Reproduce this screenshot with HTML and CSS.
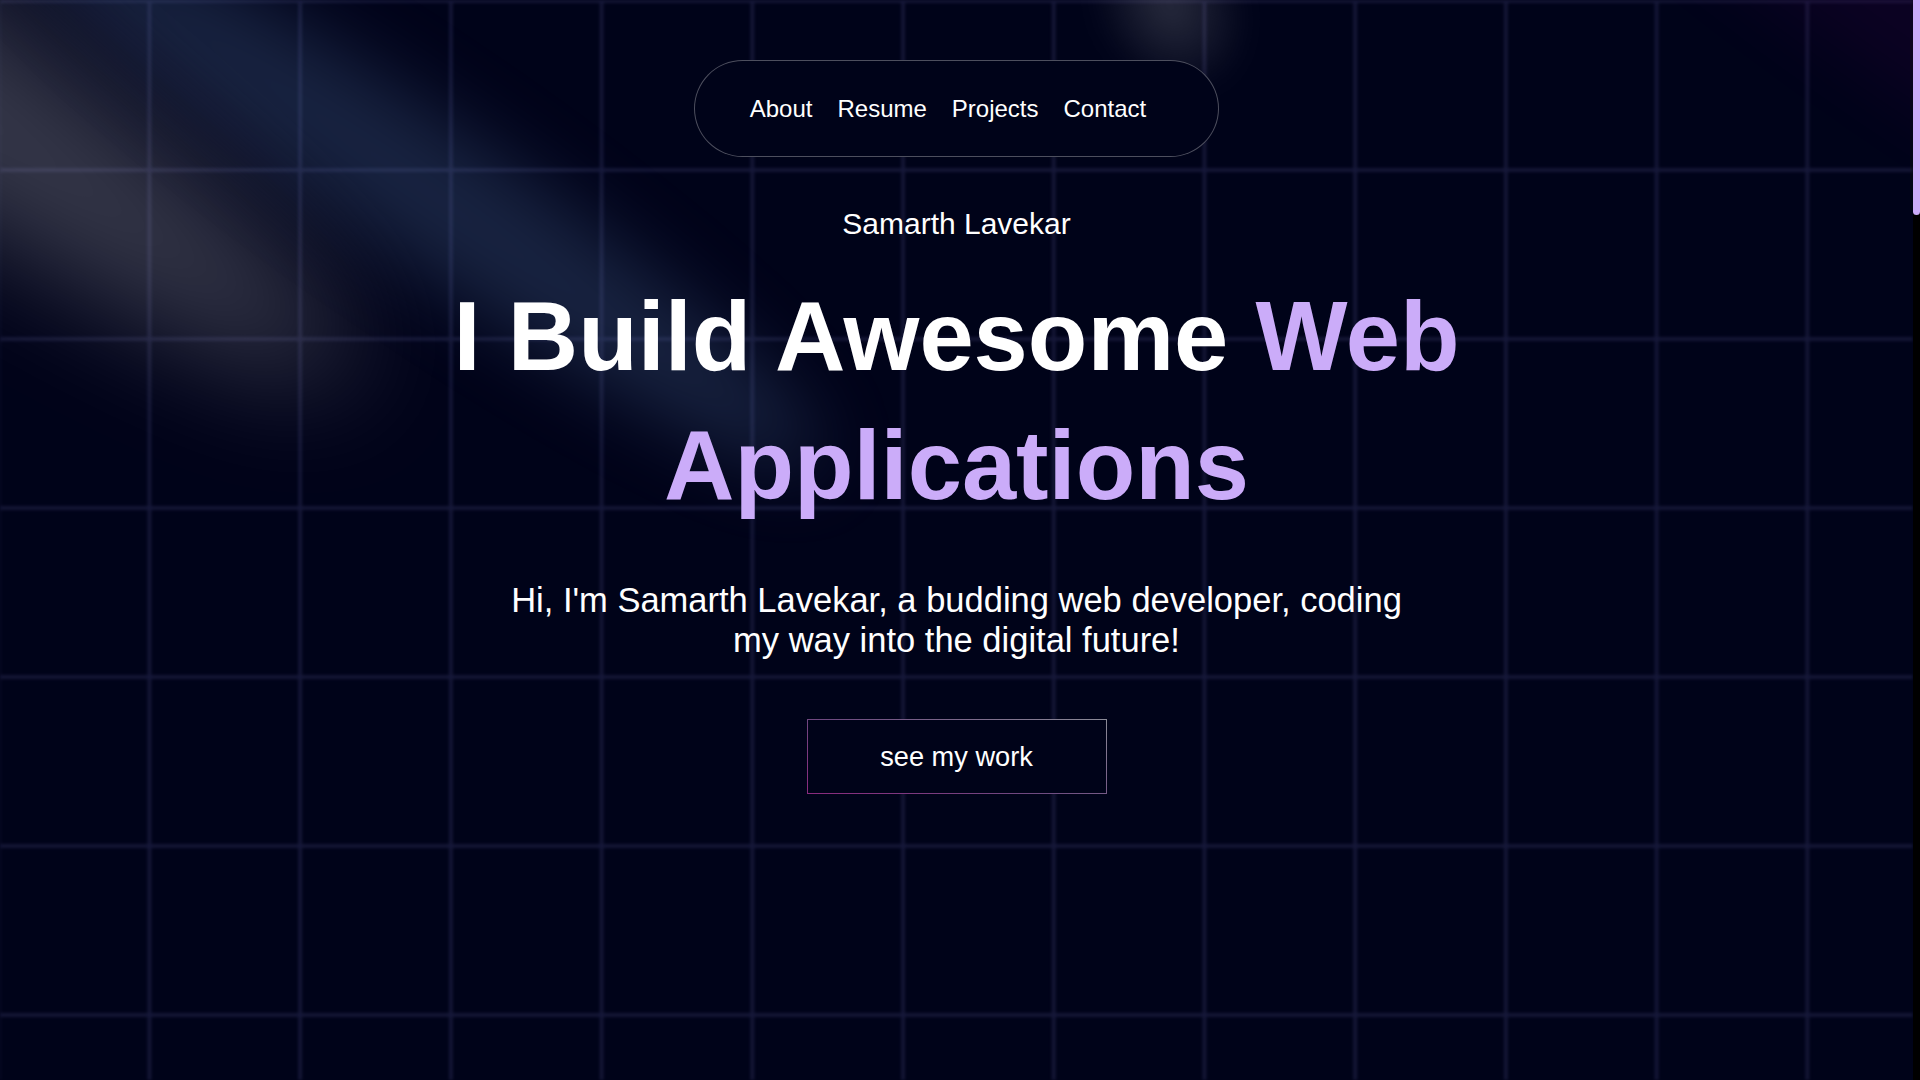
FILE: index.html
```html
<!DOCTYPE html>
<html lang="en">
<head>
<meta charset="utf-8">
<title>Samarth Lavekar</title>
<link rel="stylesheet" href="styles.css">
</head>
<body>
<div class="page">
  <main class="hero">
    <div class="grid-bg" aria-hidden="true"></div>

    <svg class="spot spot-white" viewBox="0 0 3787 2842" fill="none" aria-hidden="true">
      <g filter="url(#blurWhite)">
        <ellipse cx="1924.71" cy="273.501" rx="1924.71" ry="273.501" transform="matrix(-0.822377 -0.568943 -0.568943 0.822377 3631.88 2291.09)" fill="white" fill-opacity="0.21"></ellipse>
      </g>
      <defs>
        <filter id="blurWhite" x="0.860352" y="0.838989" width="3785.16" height="2840.26" filterUnits="userSpaceOnUse" color-interpolation-filters="sRGB">
          <feGaussianBlur stdDeviation="151"></feGaussianBlur>
        </filter>
      </defs>
    </svg>

    <svg class="spot spot-blue" viewBox="0 0 3787 2842" fill="none" aria-hidden="true">
      <g filter="url(#blurBlue)">
        <ellipse cx="1924.71" cy="273.501" rx="1924.71" ry="273.501" transform="matrix(-0.822377 -0.568943 -0.568943 0.822377 3631.88 2291.09)" fill="#6f9ad6" fill-opacity="0.21"></ellipse>
      </g>
      <defs>
        <filter id="blurBlue" x="0.860352" y="0.838989" width="3785.16" height="2840.26" filterUnits="userSpaceOnUse" color-interpolation-filters="sRGB">
          <feGaussianBlur stdDeviation="151"></feGaussianBlur>
        </filter>
      </defs>
    </svg>

    <svg class="spot spot-purple" viewBox="0 0 3787 2842" fill="none" aria-hidden="true">
      <g filter="url(#blurPurple)">
        <ellipse cx="1924.71" cy="273.501" rx="1924.71" ry="273.501" transform="matrix(-0.822377 -0.568943 -0.568943 0.822377 3631.88 2291.09)" fill="purple" fill-opacity="0.21"></ellipse>
      </g>
      <defs>
        <filter id="blurPurple" x="0.860352" y="0.838989" width="3785.16" height="2840.26" filterUnits="userSpaceOnUse" color-interpolation-filters="sRGB">
          <feGaussianBlur stdDeviation="151"></feGaussianBlur>
        </filter>
      </defs>
    </svg>

    <div class="glow-top" aria-hidden="true"></div>

    <nav class="nav">
      <a class="nav-link" href="#about">About</a>
      <a class="nav-link" href="#resume">Resume</a>
      <a class="nav-link" href="#projects">Projects</a>
      <a class="nav-link" href="#contact">Contact</a>
    </nav>

    <p class="name">Samarth Lavekar</p>

    <h1 class="title">I Build Awesome <span class="accent">Web Applications</span></h1>

    <p class="intro">Hi, I'm Samarth Lavekar, a budding web developer, coding my way into the digital future!</p>

    <a class="cta" href="#projects">see my work</a>
  </main>

  <div class="scrollbar" aria-hidden="true">
    <div class="scrollbar-thumb"></div>
  </div>
</div>
</body>
</html>
```
FILE: styles.css
```css
html {
  background: #000319;
}

body {
  margin: 0;
  background: #000319;
  color: #ffffff;
  font-family: "Liberation Sans", Arial, sans-serif;
  overflow: hidden;
}

.page {
  display: flex;
  height: 1080px;
}

.hero {
  position: relative;
  flex: 1;
  height: 1080px;
  overflow: hidden;
  display: flex;
  flex-direction: column;
  align-items: center;
}

.scrollbar {
  width: 7px;
  flex: none;
  height: 1080px;
  background: #000000;
}

.scrollbar-thumb {
  height: 215px;
  background: #cbacf9;
  border-radius: 0 0 4px 4px;
}

.grid-bg {
  position: absolute;
  inset: 0;
  z-index: 0;
  background-image:
    linear-gradient(to right, rgba(44, 44, 88, 0.85) 0, rgba(44, 44, 88, 0.85) 4px, transparent 4px),
    linear-gradient(to bottom, rgba(44, 44, 88, 0.85) 0, rgba(44, 44, 88, 0.85) 4px, transparent 4px);
  background-size: 150.73px 100%, 100% 169px;
  background-position: -3.3px 0, 0 -1px;
  filter: blur(1.4px);
  opacity: 0.52;
}

.spot {
  position: absolute;
  z-index: 1;
  pointer-events: none;
  transform: translate(-50%, -40%);
}

.spot-white {
  left: -250px;
  top: -150px;
  width: 84%;
  height: 1080px;
}

.spot-blue {
  left: 420px;
  top: 100px;
  width: 960px;
  height: 864px;
}

.spot-purple {
  left: 100%;
  top: -70px;
  width: 960px;
  height: 864px;
  opacity: 0.45;
}

.glow-top {
  position: absolute;
  z-index: 1;
  left: 1095px;
  top: -90px;
  width: 150px;
  height: 190px;
  border-radius: 50%;
  background: radial-gradient(ellipse at center, rgba(255, 255, 255, 0.16) 0%, rgba(255, 255, 255, 0.06) 45%, rgba(255, 255, 255, 0) 70%);
  filter: blur(12px);
  transform: rotate(-30deg);
}

.nav {
  position: relative;
  z-index: 2;
  margin-top: 60px;
  height: 97px;
  box-sizing: border-box;
  display: flex;
  align-items: center;
  gap: 25px;
  padding: 0 72px 0 55px;
  border: 1px solid rgba(255, 255, 255, 0.3);
  border-radius: 49px;
  background: #000319;
}

.nav-link {
  color: #ffffff;
  text-decoration: none;
  font-size: 24px;
  line-height: 28px;
}

.name {
  position: relative;
  z-index: 2;
  margin: 48.6px 0 0;
  font-size: 30px;
  line-height: 36px;
}

.title {
  position: relative;
  z-index: 2;
  margin: 30.6px 0 0;
  max-width: 1240px;
  font-size: 97.5px;
  line-height: 129px;
  font-weight: 700;
  text-align: center;
}

.accent {
  color: #cbacf9;
}

.intro {
  position: relative;
  z-index: 2;
  margin: 49.6px 0 0;
  max-width: 915px;
  font-size: 34.5px;
  line-height: 40px;
  text-align: center;
}

.cta {
  position: relative;
  z-index: 2;
  margin-top: 59.5px;
  width: 300px;
  height: 75px;
  box-sizing: border-box;
  display: flex;
  align-items: center;
  justify-content: center;
  border: 1px solid transparent;
  background:
    linear-gradient(#000319, #000319) padding-box,
    linear-gradient(20deg, #8a2a7e 0%, #6e4a80 45%, #8b8b97 100%) border-box;
  color: #ffffff;
  text-decoration: none;
  font-size: 27.2px;
  line-height: 32px;
}
```
